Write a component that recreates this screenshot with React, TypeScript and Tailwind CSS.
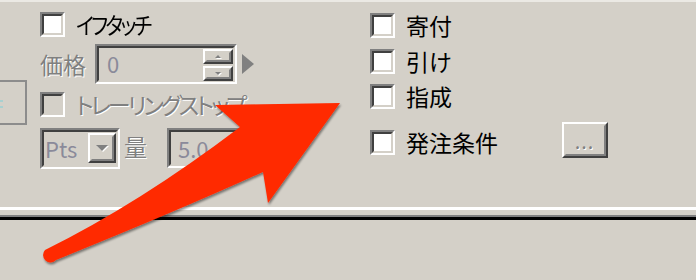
import React from 'react';

const sunkenOuter = 'border-2 border-t-[#808080] border-l-[#808080] border-b-white border-r-white';
const sunkenInner = 'border-2 border-t-[#404040] border-l-[#404040] border-b-[#d4d0c8] border-r-[#d4d0c8]';
const raisedOuter = 'border-2 border-t-white border-l-white border-b-[#404040] border-r-[#404040]';
const raisedInner = 'border-2 border-t-[#d4d0c8] border-l-[#d4d0c8] border-b-[#808080] border-r-[#808080]';
const disabledText = 'text-[#808080] [text-shadow:1px_1px_0_#ffffff]';

const Checkbox: React.FC<{ disabled?: boolean }> = ({ disabled }) => (
  <div className={`h-[25px] w-[25px] shrink-0 ${sunkenOuter}`}>
    <div className={`h-full w-full ${sunkenInner} ${disabled ? 'bg-[#d4d0c8]' : 'bg-white'}`} />
  </div>
);

const CheckRow: React.FC<{ label: string; disabled?: boolean; tight?: string }> = ({ label, disabled, tight }) => (
  <div className="flex h-[25px] items-center gap-[11px]">
    <Checkbox disabled={disabled} />
    <span
      className={`inline-block whitespace-nowrap text-[23px] leading-none ${tight ?? ''} ${
        disabled ? disabledText : 'text-black'
      }`}
    >
      {label}
    </span>
  </div>
);

// small gray triangle used on spinner / dropdown buttons
const Tri: React.FC<{ dir: 'up' | 'down'; size?: number }> = ({ dir, size = 4 }) => (
  <div
    className={`h-0 w-0 border-x-transparent ${
      dir === 'up' ? 'border-b-[#808080]' : 'border-t-[#808080]'
    } drop-shadow-[1px_1px_0_#ffffff]`}
    style={{
      borderLeftWidth: size,
      borderRightWidth: size,
      borderTopWidth: dir === 'down' ? size : 0,
      borderBottomWidth: dir === 'up' ? size : 0,
    }}
  />
);

const SpinButton: React.FC<{ dir: 'up' | 'down' }> = ({ dir }) => (
  <div className={`h-[15px] w-[30px] ${raisedOuter}`}>
    <div className={`flex h-full w-full items-center justify-center ${raisedInner}`}>
      <Tri dir={dir} size={3} />
    </div>
  </div>
);

const Arrow: React.FC = () => (
  <svg className="pointer-events-none absolute left-0 top-0" width="696" height="280" viewBox="0 0 696 280">
    <defs>
      <filter id="shadow" x="-10%" y="-10%" width="130%" height="130%">
        <feDropShadow dx="1" dy="2" stdDeviation="1.3" floodColor="#000" floodOpacity="0.45" />
      </filter>
    </defs>
    <path
      d="M 45 250 Q 140 203 240 127 L 215 105 L 340 103 L 268 203 L 263 172 Q 175 212 56 260 A 6.5 6.5 0 0 1 45 250 Z"
      fill="#ff2a00"
      filter="url(#shadow)"
    />
  </svg>
);

export default function App() {
  return (
    <div className="relative h-[280px] w-[696px] overflow-hidden bg-[#d4d0c8] font-['Noto_Sans_CJK_JP','Noto_Sans',sans-serif]">
      <div className="h-[2px] bg-[#ebe9e4]" />

      <div className="flex h-[205px]">
        {/* cut-off button at the left edge */}
        <div className="w-[27px] shrink-0 pt-[78px]">
          <div className="relative h-[45px] border-y-2 border-r-2 border-[#8c8c8c]">
            <div className="absolute left-0 top-[18px] h-[2px] w-[3px] bg-[#a8d0d0]" />
            <div className="absolute left-0 top-[24px] h-[2px] w-[3px] bg-[#a8d0d0]" />
          </div>
        </div>

        {/* left column */}
        <div className="ml-[13px] flex w-[330px] shrink-0 flex-col pt-[10px]">
          <CheckRow
            label="イフタッチ"
            tight="origin-left scale-x-[0.88] tracking-[-3px] [font-feature-settings:'palt']"
          />

          <div className="mt-[7px] flex h-[40px] items-center">
            <span className={`w-[55px] text-[23px] leading-none ${disabledText}`}>価格</span>
            <div className={`h-[40px] w-[142px] ${sunkenOuter}`}>
              <div className={`flex h-full w-full items-start bg-[#d4d0c8] ${sunkenInner}`}>
                <span className="mt-[4px] flex-1 pl-[8px] text-[22px] leading-none text-[#8a8a9a]">0</span>
                <div className="flex flex-col gap-[2px] pt-[1px]">
                  <SpinButton dir="up" />
                  <SpinButton dir="down" />
                </div>
              </div>
            </div>
            <div className="ml-[5px] h-0 w-0 border-y-[10px] border-l-[12px] border-y-transparent border-l-[#808080]" />
          </div>

          <div className="mt-[8px]">
            <CheckRow label="トレーリングストップ" disabled tight="tracking-[-3px] [font-feature-settings:'palt']" />
          </div>

          <div className="mt-[11px] flex h-[41px] items-start">
            <div className={`h-[41px] w-[80px] ${sunkenOuter}`}>
              <div className={`flex h-full w-full items-start bg-[#d4d0c8] ${sunkenInner}`}>
                <span className="mt-[5px] flex-1 pl-[1px] text-[22px] leading-none text-[#8a8a9a]">Pts</span>
                <div className={`mt-[1px] h-[30px] w-[28px] ${raisedOuter}`}>
                  <div className={`flex h-full w-full items-center justify-center ${raisedInner}`}>
                    <Tri dir="down" size={6} />
                  </div>
                </div>
              </div>
            </div>
            <span className={`ml-[4px] mt-[7px] text-[23px] leading-none ${disabledText}`}>量</span>
            <div className={`ml-[20px] h-[40px] w-[100px] ${sunkenOuter}`}>
              <div className={`h-full w-full bg-[#d4d0c8] pl-[7px] pt-[5px] ${sunkenInner}`}>
                <span className="text-[22px] leading-none text-[#8a8a9a]">5.0</span>
              </div>
            </div>
          </div>
        </div>

        {/* right column */}
        <div className="flex flex-col pt-[11px]">
          <CheckRow label="寄付" />
          <div className="mt-[11px]">
            <CheckRow label="引け" />
          </div>
          <div className="mt-[10px]">
            <CheckRow label="指成" />
          </div>
          <div className="mt-[13px] flex h-[36px] items-start">
            <div className="mt-[8px] w-[192px]">
              <CheckRow label="発注条件" />
            </div>
            <div className={`h-[36px] w-[46px] ${raisedOuter}`}>
              <div className={`flex h-full w-full items-end justify-center pb-[4px] ${raisedInner}`}>
                <span className={`text-[14px] font-bold leading-none tracking-[2px] ${disabledText}`}>...</span>
              </div>
            </div>
          </div>
        </div>
      </div>

      {/* separator */}
      <div className="h-[3px] bg-white" />
      <div className="h-[5px]" />
      <div className="h-[2px] bg-[#808080]" />
      <div className="h-[3px] bg-black" />

      <Arrow />
    </div>
  );
}
